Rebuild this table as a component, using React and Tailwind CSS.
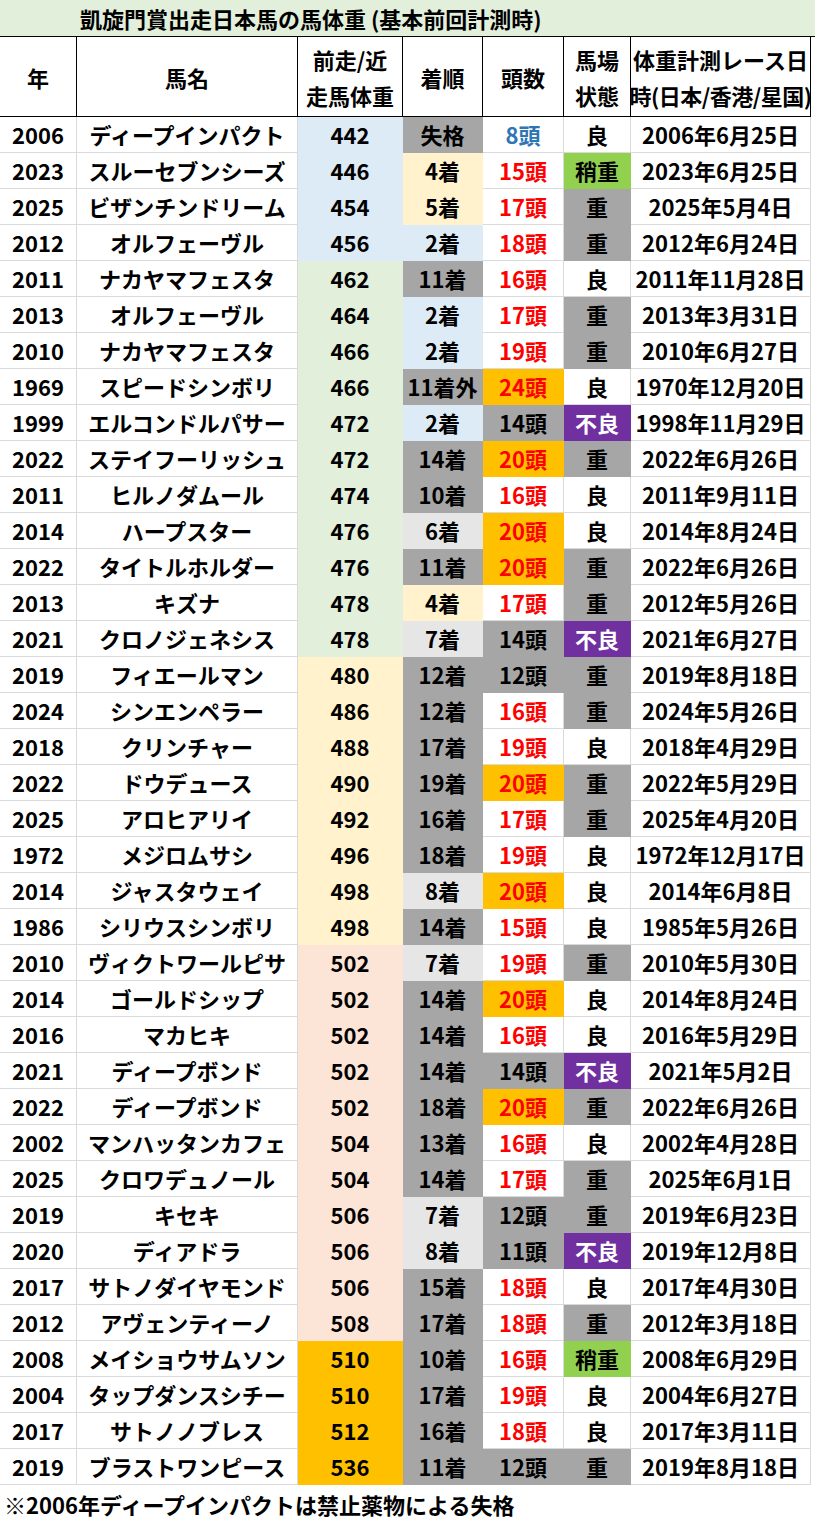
import React from "react";

const FONT = { fontFamily: '"Noto Sans CJK JP", "Noto Sans", sans-serif' };

// year, name, weight, rank, runners, going, date
const rows = [
  ["2006", "ディープインパクト", 442, "失格", 8, "良", "2006年6月25日"],
  ["2023", "スルーセブンシーズ", 446, "4着", 15, "稍重", "2023年6月25日"],
  ["2025", "ビザンチンドリーム", 454, "5着", 17, "重", "2025年5月4日"],
  ["2012", "オルフェーヴル", 456, "2着", 18, "重", "2012年6月24日"],
  ["2011", "ナカヤマフェスタ", 462, "11着", 16, "良", "2011年11月28日"],
  ["2013", "オルフェーヴル", 464, "2着", 17, "重", "2013年3月31日"],
  ["2010", "ナカヤマフェスタ", 466, "2着", 19, "重", "2010年6月27日"],
  ["1969", "スピードシンボリ", 466, "11着外", 24, "良", "1970年12月20日"],
  ["1999", "エルコンドルパサー", 472, "2着", 14, "不良", "1998年11月29日"],
  ["2022", "ステイフーリッシュ", 472, "14着", 20, "重", "2022年6月26日"],
  ["2011", "ヒルノダムール", 474, "10着", 16, "良", "2011年9月11日"],
  ["2014", "ハープスター", 476, "6着", 20, "良", "2014年8月24日"],
  ["2022", "タイトルホルダー", 476, "11着", 20, "重", "2022年6月26日"],
  ["2013", "キズナ", 478, "4着", 17, "重", "2012年5月26日"],
  ["2021", "クロノジェネシス", 478, "7着", 14, "不良", "2021年6月27日"],
  ["2019", "フィエールマン", 480, "12着", 12, "重", "2019年8月18日"],
  ["2024", "シンエンペラー", 486, "12着", 16, "重", "2024年5月26日"],
  ["2018", "クリンチャー", 488, "17着", 19, "良", "2018年4月29日"],
  ["2022", "ドウデュース", 490, "19着", 20, "重", "2022年5月29日"],
  ["2025", "アロヒアリイ", 492, "16着", 17, "重", "2025年4月20日"],
  ["1972", "メジロムサシ", 496, "18着", 19, "良", "1972年12月17日"],
  ["2014", "ジャスタウェイ", 498, "8着", 20, "良", "2014年6月8日"],
  ["1986", "シリウスシンボリ", 498, "14着", 15, "良", "1985年5月26日"],
  ["2010", "ヴィクトワールピサ", 502, "7着", 19, "重", "2010年5月30日"],
  ["2014", "ゴールドシップ", 502, "14着", 20, "良", "2014年8月24日"],
  ["2016", "マカヒキ", 502, "14着", 16, "良", "2016年5月29日"],
  ["2021", "ディープボンド", 502, "14着", 14, "不良", "2021年5月2日"],
  ["2022", "ディープボンド", 502, "18着", 20, "重", "2022年6月26日"],
  ["2002", "マンハッタンカフェ", 504, "13着", 16, "良", "2002年4月28日"],
  ["2025", "クロワデュノール", 504, "14着", 17, "重", "2025年6月1日"],
  ["2019", "キセキ", 506, "7着", 12, "重", "2019年6月23日"],
  ["2020", "ディアドラ", 506, "8着", 11, "不良", "2019年12月8日"],
  ["2017", "サトノダイヤモンド", 506, "15着", 18, "良", "2017年4月30日"],
  ["2012", "アヴェンティーノ", 508, "17着", 18, "重", "2012年3月18日"],
  ["2008", "メイショウサムソン", 510, "10着", 16, "稍重", "2008年6月29日"],
  ["2004", "タップダンスシチー", 510, "17着", 19, "良", "2004年6月27日"],
  ["2017", "サトノノブレス", 512, "16着", 18, "良", "2017年3月11日"],
  ["2019", "ブラストワンピース", 536, "11着", 12, "重", "2019年8月18日"],
];

const cols = "grid grid-cols-[77px_221px_105px_80px_81px_67px_180px]";

function weightCls(w) {
  if (w < 460) return "bg-[#ddebf7] border-[#ddebf7]";
  if (w < 480) return "bg-[#e2efda] border-[#e2efda]";
  if (w < 500) return "bg-[#fff2cc] border-[#fff2cc]";
  if (w < 510) return "bg-[#fce4d6] border-[#fce4d6]";
  return "bg-[#ffc000] border-[#ffc000]";
}

function rankCls(r) {
  const n = parseInt(r, 10);
  if (Number.isNaN(n) || r.endsWith("外")) return "bg-[#a6a6a6] border-[#a6a6a6]";
  if (n === 2) return "bg-[#ddebf7] border-[#ddebf7]";
  if (n <= 5) return "bg-[#fff2cc] border-[#fff2cc]";
  if (n <= 9) return "bg-[#e7e6e6] border-[#e7e6e6]";
  return "bg-[#a6a6a6] border-[#a6a6a6]";
}

function runnersCls(n) {
  if (n < 10) return "border-[#dadada] text-[#2e75b6]";
  if (n <= 14) return "bg-[#a6a6a6] border-[#a6a6a6]";
  if (n < 20) return "border-[#dadada] text-[#ff0000]";
  return "bg-[#ffc000] border-[#ffc000] text-[#ff0000]";
}

function goingCls(g) {
  if (g === "稍重") return "bg-[#92d050] border-[#92d050]";
  if (g === "重") return "bg-[#a6a6a6] border-[#a6a6a6]";
  if (g === "不良") return "bg-[#7030a0] border-[#7030a0] text-white";
  return "border-[#dadada]";
}

function Cell({ className = "", children }) {
  return (
    <div
      className={`flex h-[36px] items-center justify-center whitespace-nowrap border-b border-r ${className}`}
    >
      {children}
    </div>
  );
}

function HeadCell({ children }) {
  return (
    <div className="flex h-[80px] flex-col items-center justify-center whitespace-nowrap border-b border-r border-black leading-[36px]">
      {children}
    </div>
  );
}

export default function App() {
  return (
    <div className="w-[815px] bg-white text-[22px] font-bold text-black" style={FONT}>
      <div className="flex h-[36px] items-center bg-[#e2efda] pl-[80px]">
        凱旋門賞出走日本馬の馬体重 (基本前回計測時)
      </div>

      <div className={`${cols} border-t border-black`}>
        <HeadCell>年</HeadCell>
        <HeadCell>馬名</HeadCell>
        <HeadCell>
          <span>前走/近</span>
          <span>走馬体重</span>
        </HeadCell>
        <HeadCell>着順</HeadCell>
        <HeadCell>頭数</HeadCell>
        <HeadCell>
          <span>馬場</span>
          <span>状態</span>
        </HeadCell>
        <HeadCell>
          <span>体重計測レース日</span>
          <span className="tracking-[-0.5px]">時(日本/香港/星国)</span>
        </HeadCell>
      </div>

      {rows.map((r, i) => (
        <div key={i} className={cols}>
          <Cell className="border-[#dadada]">{r[0]}</Cell>
          <Cell className="border-[#dadada]">{r[1]}</Cell>
          <Cell className={weightCls(r[2])}>{r[2]}</Cell>
          <Cell className={rankCls(r[3])}>{r[3]}</Cell>
          <Cell className={runnersCls(r[4])}>{r[4]}頭</Cell>
          <Cell className={goingCls(r[5])}>{r[5]}</Cell>
          <Cell className="border-[#dadada]">{r[6]}</Cell>
        </div>
      ))}

      <div className="flex h-[38px] items-center pl-[4px]">
        ※2006年ディープインパクトは禁止薬物による失格
      </div>
    </div>
  );
}
